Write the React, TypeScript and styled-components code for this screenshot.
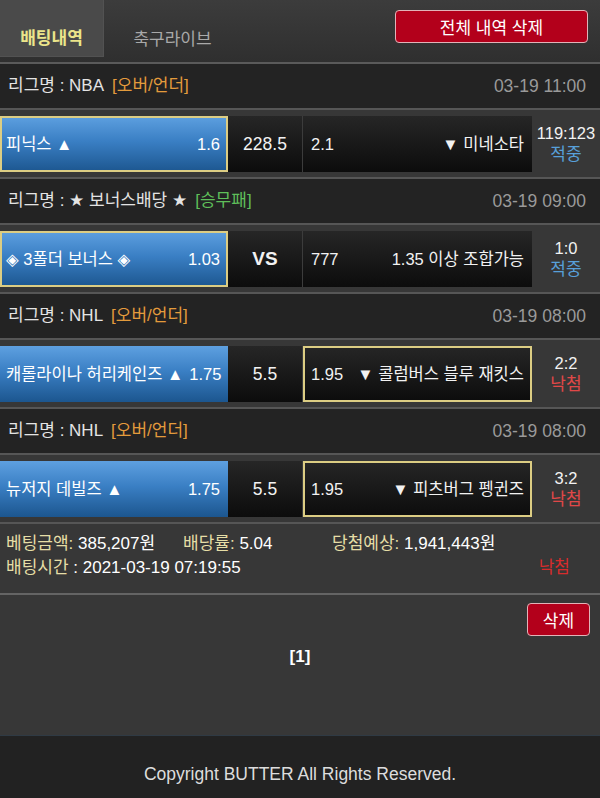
import React from 'react'
import styled, {createGlobalStyle, css} from 'styled-components'

const GlobalStyle = createGlobalStyle`
  html, body {
    margin: 0;
    padding: 0;
    background: #373737;
    font-family: "Liberation Sans", "DejaVu Sans", "Noto Sans CJK KR", sans-serif;
    color: #eee;
  }
  * { box-sizing: border-box; }
`

const Page = styled.div`
  min-height: 100vh;
  display: flex;
  flex-direction: column;
`
const Main = styled.main`
  flex: 1;
`
const TopBar = styled.div`
  height: 64px;
  display: flex;
  align-items: flex-start;
  background: linear-gradient(#3c3c3c, #2f2f2f);
  border-bottom: 2px solid #5a5a5a;
`
type TabProps = {active?: boolean}
const Tab = styled.div<TabProps>`
  height: 57px;
  width: ${({active}) => (active ? '104px' : '137px')};
  display: flex;
  align-items: flex-end;
  justify-content: center;
  padding-bottom: 7px;
  font-size: 17px;
  font-weight: ${({active}) => (active ? 'bold' : 'normal')};
  color: ${({active}) => (active ? '#ece58a' : '#a9a9a9')};
  ${({active}) =>
    active &&
    css`
      background: #4a4a4a;
      border: 1px solid #525252;
      border-top: none;
      border-left: none;
    `}
`
const TopActions = styled.div`
  margin-left: auto;
  padding: 10px 12px 0 0;
`
type BtnProps = {wide?: boolean}
const RedButton = styled.button<BtnProps>`
  background: #b3001b;
  border: 1px solid #e2b3b8;
  border-radius: 4px;
  color: #fff;
  font-family: inherit;
  font-size: 17px;
  height: 33px;
  width: ${({wide}) => (wide ? '193px' : '63px')};
  cursor: pointer;
`
const LeagueHeader = styled.div`
  height: 46px;
  background: #232323;
  border-bottom: 2px solid #565656;
  display: flex;
  align-items: center;
  padding: 0 14px 0 8px;
  font-size: 17px;
  line-height: 20px;
  color: #e4e4e4;
`
type TagProps = {kind: 'ou' | 'wdl'}
const Tag = styled.span<TagProps>`
  margin-left: 8px;
  color: ${({kind}) => (kind === 'ou' ? '#e39b3c' : '#5fbf5a')};
`
const DateText = styled.span`
  margin-left: auto;
  font-size: 17.5px;
  color: #9a9a9a;
`
const BetRow = styled.div`
  display: grid;
  grid-template-columns: 228px 75px 229px 1fr;
  padding: 6px 0 5px;
  border-bottom: 2px solid #565656;
`
type CellProps = {picked?: boolean}
const pickedBorder = css`
  box-shadow: inset 0 0 0 2px #dccd83;
`
const cellBase = css`
  height: 56px;
  display: flex;
  align-items: center;
  justify-content: space-between;
  gap: 6px;
  white-space: nowrap;
  line-height: 20px;
  font-size: 16.5px;
`
const HomeCell = styled.div<CellProps>`
  ${cellBase}
  padding: 0 8px 0 6px;
  color: #fff;
  background: linear-gradient(#5ea0e0, #3a7fc4 45%, #1c568f);
  ${({picked}) => picked && pickedBorder}
`
const MidCell = styled.div`
  ${cellBase}
  justify-content: center;
  font-size: 17.5px;
  color: #f2f2f2;
  background: linear-gradient(#262626, #0c0c0c);
  border-right: 1px solid #3c3c3c;
`
const VsText = styled.b`
  font-size: 19px;
`
const AwayCell = styled.div<CellProps>`
  ${cellBase}
  padding: 0 8px;
  color: #f2f2f2;
  background: linear-gradient(#262626, #0c0c0c);
  ${({picked}) => picked && pickedBorder}
`
const ResultCell = styled.div`
  height: 56px;
  display: flex;
  flex-direction: column;
  align-items: center;
  justify-content: center;
  font-size: 16.5px;
  line-height: 22px;
  color: #f2f2f2;
`
type StatusProps = {win?: boolean}
const Status = styled.span<StatusProps>`
  font-size: 17px;
  color: ${({win}) => (win ? '#58a0da' : '#e04848')};
`
const Summary = styled.div`
  padding: 8px 6px 13px;
  border-bottom: 2px solid #646464;
  font-size: 17px;
`
const SummaryLine = styled.div`
  display: grid;
  grid-template-columns: 177px 149px 1fr;
  height: 24px;
  line-height: 20px;
  align-items: center;
  color: #fff;
`
const TimeLine = styled.div`
  display: flex;
  height: 24px;
  line-height: 20px;
  align-items: center;
  color: #fff;
`
const Label = styled.span`
  color: #e6dea6;
`
const LostText = styled.span`
  margin-left: auto;
  margin-right: 24px;
  color: #d62c2c;
`
const Actions = styled.div`
  display: flex;
  justify-content: flex-end;
  padding: 8px 10px 0;
`
const Pager = styled.div`
  text-align: center;
  font-weight: bold;
  font-size: 17px;
  color: #fff;
  margin-top: 11px;
`
const Footer = styled.footer`
  height: 63px;
  background: #222;
  border-top: 1px solid #2f3a44;
  display: flex;
  align-items: center;
  justify-content: center;
  font-size: 17.5px;
  color: #ddd;
  padding-top: 14px;
`

type Bet = {
  league: string
  tag: string
  kind: 'ou' | 'wdl'
  date: string
  home: string
  homeOdds: string
  mid: string
  awayOdds: string
  away: string
  pick: 'home' | 'away'
  score: string
  win: boolean
}

const bets: Bet[] = [
  {league: 'NBA', tag: '[오버/언더]', kind: 'ou', date: '03-19 11:00', home: '피닉스 ▲', homeOdds: '1.6', mid: '228.5', awayOdds: '2.1', away: '▼ 미네소타', pick: 'home', score: '119:123', win: true},
  {league: '★ 보너스배당 ★', tag: '[승무패]', kind: 'wdl', date: '03-19 09:00', home: '◈ 3폴더 보너스 ◈', homeOdds: '1.03', mid: 'VS', awayOdds: '777', away: '1.35 이상 조합가능', pick: 'home', score: '1:0', win: true},
  {league: 'NHL', tag: '[오버/언더]', kind: 'ou', date: '03-19 08:00', home: '캐롤라이나 허리케인즈 ▲', homeOdds: '1.75', mid: '5.5', awayOdds: '1.95', away: '▼ 콜럼버스 블루 재킷스', pick: 'away', score: '2:2', win: false},
  {league: 'NHL', tag: '[오버/언더]', kind: 'ou', date: '03-19 08:00', home: '뉴저지 데빌즈 ▲', homeOdds: '1.75', mid: '5.5', awayOdds: '1.95', away: '▼ 피츠버그 펭귄즈', pick: 'away', score: '3:2', win: false},
]

export default function App() {
  return (
    <Page>
      <GlobalStyle />
      <Main>
        <TopBar>
          <Tab active>배팅내역</Tab>
          <Tab>축구라이브</Tab>
          <TopActions>
            <RedButton wide>전체 내역 삭제</RedButton>
          </TopActions>
        </TopBar>
        {bets.map((b, i) => (
          <div key={i}>
            <LeagueHeader>
              리그명 : {b.league}
              <Tag kind={b.kind}>{b.tag}</Tag>
              <DateText>{b.date}</DateText>
            </LeagueHeader>
            <BetRow>
              <HomeCell picked={b.pick === 'home'}>
                <span>{b.home}</span>
                <span>{b.homeOdds}</span>
              </HomeCell>
              <MidCell>{b.mid === 'VS' ? <VsText>VS</VsText> : b.mid}</MidCell>
              <AwayCell picked={b.pick === 'away'}>
                <span>{b.awayOdds}</span>
                <span>{b.away}</span>
              </AwayCell>
              <ResultCell>
                <span>{b.score}</span>
                <Status win={b.win}>{b.win ? '적중' : '낙첨'}</Status>
              </ResultCell>
            </BetRow>
          </div>
        ))}
        <Summary>
          <SummaryLine>
            <span><Label>베팅금액:</Label> 385,207원</span>
            <span><Label>배당률:</Label> 5.04</span>
            <span><Label>당첨예상:</Label> 1,941,443원</span>
          </SummaryLine>
          <TimeLine>
            <span><Label>배팅시간</Label> : 2021-03-19 07:19:55</span>
            <LostText>낙첨</LostText>
          </TimeLine>
        </Summary>
        <Actions>
          <RedButton>삭제</RedButton>
        </Actions>
        <Pager>[1]</Pager>
      </Main>
      <Footer>Copyright BUTTER All Rights Reserved.</Footer>
    </Page>
  )
}
